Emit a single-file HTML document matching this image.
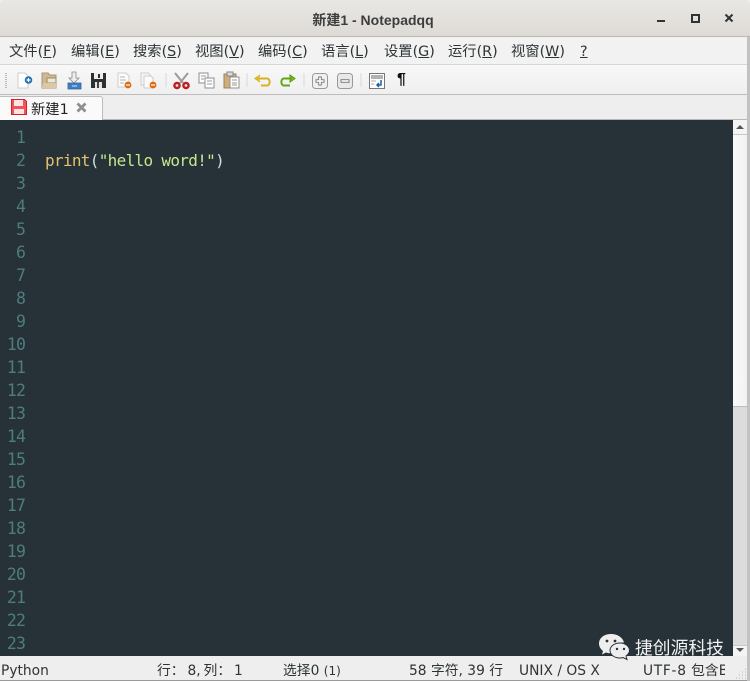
<!DOCTYPE html>
<html><head><meta charset="utf-8"><style>
html,body{margin:0;padding:0;background:#fff}
#w{position:relative;width:750px;height:681px;overflow:hidden;background:#eee;font-family:"DejaVu Sans","Noto Sans CJK SC",sans-serif;color:#2e3436}
#w div,#w span.a,#w svg{position:absolute}
.t{white-space:nowrap}
.m{top:43px;font-size:14.3px;line-height:18px;font-family:"DejaVu Sans","Noto Sans CJK SC",sans-serif;color:#2e3436;white-space:nowrap}
.m u{text-underline-offset:1px}
.n{left:0;width:25px;text-align:right;font:16.5px/23px "DejaVu Sans Mono",monospace;color:#4f7c7c;letter-spacing:-.9px;height:23px}
.s{top:662px;font-size:13.8px;line-height:18px;font-family:"DejaVu Sans","Noto Sans CJK SC",sans-serif;color:#2e3436;white-space:nowrap}
</style></head><body><div id="w">
<div style="left:0;top:0;width:750px;height:37px;background:linear-gradient(#e9e7e4,#dedbd6);border-bottom:1px solid #bfb8ad;box-sizing:border-box;border-radius:5px 5px 0 0"></div>
<div class="t" style="left:0;top:10px;width:746px;text-align:center;font:bold 14px/20px 'Liberation Sans','Noto Sans CJK SC',sans-serif;color:#3d3d3d">新建1 - Notepadqq</div>
<svg style="left:655px;top:10px" width="85" height="16" viewBox="0 0 85 16"><path d="M2 11h8" stroke="#2e3436" stroke-width="2"/><rect x="37" y="5" width="7" height="7" fill="none" stroke="#2e3436" stroke-width="2"/><path d="M70.500 4.500l7 7M77.500 4.500l-7 7" stroke="#2e3436" stroke-width="2"/></svg>
<div style="left:0;top:37px;width:750px;height:28px;background:#f2f2f2;border-bottom:1px solid #d6d6d6;box-sizing:border-box"></div>
<div class="m" style="left:9px">文件(<u>F</u>)</div>
<div class="m" style="left:71px">编辑(<u>E</u>)</div>
<div class="m" style="left:133px">搜索(<u>S</u>)</div>
<div class="m" style="left:195px">视图(<u>V</u>)</div>
<div class="m" style="left:258px">编码(<u>C</u>)</div>
<div class="m" style="left:321px">语言(<u>L</u>)</div>
<div class="m" style="left:384px">设置(<u>G</u>)</div>
<div class="m" style="left:448px">运行(<u>R</u>)</div>
<div class="m" style="left:511px">视窗(<u>W</u>)</div>
<div class="m" style="left:580px"><u>?</u></div>
<div style="left:0;top:65px;width:750px;height:30px;background:linear-gradient(#f8f8f8,#efefef);border-bottom:1px solid #bdbdbd;box-sizing:border-box"></div>
<svg style="left:4px;top:72px" width="6" height="17"><path d="M2 1v15" stroke="#bbb" stroke-width="2" stroke-dasharray="1 1"/></svg>
<svg style="left:0;top:65px" width="420" height="30" viewBox="0 0 420 30">
<path d="M18 8h7l3 3v12H18z" fill="#fff" stroke="#c8ccd0"/><circle cx="28.500" cy="15" r="3.800" fill="#2a6fb5"/><path d="M26.500 15h4M28.500 13v4" stroke="#fff" stroke-width="1.200"/>
<path d="M42 8h6l2 2h6v13H42z" fill="#cdb891" stroke="#ab9672"/><path d="M47 13h9v5h-9z" fill="#eee6d6" stroke="#9c8b6c"/><path d="M42 22l1-4h13v5H42z" fill="#dcc8a4"/>
<path d="M72 7h4v6h3l-5 5-5-5h3z" fill="#eee" stroke="#8a8a8a" stroke-width=".8"/><path d="M68 18h13v6H68z" fill="#3f80c0" stroke="#2a639c" stroke-width=".8"/><path d="M72 21h5" stroke="#cfe3f7"/>
<path d="M91 8h15v15H91z" fill="#2d3134"/><path d="M94 8h9v6h-9z" fill="#eee"/><path d="M95 17h7v6h-7z" fill="#e4e4e4"/><path d="M97 17h2v6h-2z" fill="#444"/><path d="M98 9h2v4h-2z" fill="#2d3134"/>
<path d="M118 8h8l3 3v11h-11z" fill="#fbfbfb" stroke="#cdcdcd"/><path d="M120 12h5M120 15h6M120 18h4" stroke="#b5b5b5"/><circle cx="128" cy="20" r="3.400" fill="#e0690f"/><path d="M126 20h4" stroke="#fff" stroke-width="1.200"/>
<path d="M141 8h7l2 2v10h-9z" fill="#f6f6f6" stroke="#cdcdcd"/><path d="M144 11h7l2 2v10h-9z" fill="#fbfbfb" stroke="#cdcdcd"/><circle cx="153" cy="20" r="3.400" fill="#e0690f"/><path d="M151 20h4" stroke="#fff" stroke-width="1.200"/>
<path d="M166 8v14" stroke="#d8d8d8"/>
<path d="M175 8l8 10M188 8l-8 10" stroke="#9a9a9a" stroke-width="2"/><circle cx="177" cy="20.500" r="2.600" fill="#f0dcdc" stroke="#b8201f" stroke-width="2.400"/><circle cx="186" cy="20.500" r="2.600" fill="#f0dcdc" stroke="#b8201f" stroke-width="2.400"/>
<path d="M199 8h9v10h-9z" fill="#fff" stroke="#8e8e8e"/><path d="M205 13h9v10h-9z" fill="#fff" stroke="#8e8e8e"/><path d="M201 11h5M201 14h3M207 16h5M207 19h5" stroke="#999"/>
<path d="M224 9h12v14h-12z" fill="#cfae7e" stroke="#a2804f"/><path d="M227 7h6v4h-6z" fill="#ddd" stroke="#888"/><path d="M230 12h9v11h-9z" fill="#fff" stroke="#909090"/><path d="M232 15h5M232 18h5M232 20h5" stroke="#999"/>
<path d="M247 8v14" stroke="#d8d8d8"/>
<path d="M260 10l-5 3.500 5 3.500" fill="#f0d36a" stroke="#cfa814" stroke-width="1"/><path d="M257 13.500h10c3.500 0 3.500 7 0 7h-6" fill="none" stroke="#d9b21f" stroke-width="2"/>
<path d="M290 10l5 3.500-5 3.500z" fill="#7ec02c" stroke="#559a10" stroke-width="1"/><path d="M292 13.500h-8c-3.500 0-3.500 7 0 7h6" fill="none" stroke="#62a816" stroke-width="2"/>
<path d="M304 8v14" stroke="#d8d8d8"/>
<rect x="312.500" y="8.500" width="15" height="15" rx="3" fill="#efefef" stroke="#999"/><path d="M320 11.500v9M315.500 16h9" stroke="#7c7c7c" stroke-width="3.600"/><path d="M320 12.500v7M316.500 16h7" stroke="#f6f6f6" stroke-width="1.800"/>
<rect x="337.500" y="8.500" width="15" height="15" rx="3" fill="#e8e8e8" stroke="#999"/><path d="M340.500 16h9" stroke="#7c7c7c" stroke-width="3.600"/><path d="M341.500 16h7" stroke="#f0f0f0" stroke-width="1.800"/>
<path d="M361 8v14" stroke="#d8d8d8"/>
<rect x="369.500" y="8.500" width="15" height="15" fill="#fff" stroke="#777"/><path d="M371 11h12M371 13h12" stroke="#666"/><path d="M371 16h5M371 19h3" stroke="#aaa"/><path d="M381 15v5h-3M379 18l-2 2 2 2" fill="none" stroke="#1c5fb0" stroke-width="1.500"/>
</svg>
<div class="t" style="left:397px;top:71px;font:bold 16px/18px 'Liberation Sans',sans-serif;color:#111">¶</div>
<div style="left:0;top:95px;width:750px;height:25px;background:#eee;border-bottom:1px solid #b8b8b8;box-sizing:border-box"></div>
<div style="left:-1px;top:96px;width:104px;height:24px;background:#fafafa;border:1px solid #bdbdbd;border-bottom:none;box-sizing:border-box;border-radius:0 3px 0 0"></div>
<svg style="left:11px;top:99px" width="16" height="16" viewBox="0 0 16 16"><path d="M.5.5h13l2 2v13H.5z" fill="#f0555a" stroke="#d92028"/><path d="M3 1h9v6H3zM3 10h10v5H3z" fill="#fbe4e4"/></svg>
<div class="t" style="left:31px;top:101px;font:14.3px/18px 'DejaVu Sans','Noto Sans CJK SC',sans-serif;color:#222">新建1</div>
<svg style="left:76px;top:102px" width="11" height="11"><path d="M1.500 1.500l8 8M9.500 1.500l-8 8" stroke="#8b9094" stroke-width="2.800"/></svg>
<div style="left:0;top:120px;width:733px;height:536px;background:#263238;overflow:hidden">
<div class="n" style="top:6px">1</div><div class="n" style="top:29px">2</div><div class="n" style="top:52px">3</div><div class="n" style="top:75px">4</div><div class="n" style="top:98px">5</div><div class="n" style="top:121px">6</div><div class="n" style="top:144px">7</div><div class="n" style="top:167px">8</div><div class="n" style="top:190px">9</div><div class="n" style="top:213px">10</div><div class="n" style="top:236px">11</div><div class="n" style="top:259px">12</div><div class="n" style="top:282px">13</div><div class="n" style="top:305px">14</div><div class="n" style="top:328px">15</div><div class="n" style="top:351px">16</div><div class="n" style="top:374px">17</div><div class="n" style="top:397px">18</div><div class="n" style="top:420px">19</div><div class="n" style="top:443px">20</div><div class="n" style="top:466px">21</div><div class="n" style="top:489px">22</div><div class="n" style="top:512px">23</div>
<div class="t" style="left:45px;top:29px;font:16px/23px 'DejaVu Sans Mono',monospace;letter-spacing:-.68px;color:#c3e88d"><span style="color:#e3c26f">print</span><span style="color:#d5dde0">(</span>"hello word!"<span style="color:#d5dde0">)</span></div>
</div>
<div style="left:733px;top:120px;width:14px;height:536px;background:#dcdcdc"></div>
<div style="left:733px;top:120px;width:14px;height:15px;background:#f4f4f4;border-bottom:1px solid #c8c8c8;box-sizing:border-box"></div>
<svg style="left:736px;top:124px" width="8" height="6"><path d="M0 5l4-4 4 4z" fill="#555"/></svg>
<div style="left:733px;top:135px;width:14px;height:272px;background:linear-gradient(90deg,#fbfbfb,#f2f2f2);border-bottom:1px solid #bdbdbd;box-sizing:border-box"></div>
<div style="left:733px;top:645px;width:14px;height:11px;background:#f4f4f4;border-top:1px solid #c8c8c8;box-sizing:border-box"></div>
<svg style="left:736px;top:647px" width="8" height="6"><path d="M0 1l4 4 4-4z" fill="#555"/></svg>
<div style="left:747px;top:37px;width:3px;height:644px;background:#c2c2c2"></div>
<div style="left:0;top:656px;width:747px;height:25px;background:#eee;border-bottom:1px solid #9a9a9a;box-sizing:border-box"></div>
<div class="s" style="left:1px">Python</div>
<div class="s" style="left:157px;word-spacing:-1.500px">行： 8, 列： 1</div>
<div class="s" style="left:283px">选择0 <span style="font-size:12px">(1)</span></div>
<div class="s" style="left:409px">58 字符, 39 行</div>
<div class="s" style="left:519px">UNIX / OS X</div>
<div class="s" style="left:643px;width:82px;overflow:hidden"><span style="letter-spacing:.7px">UTF-8</span> 包含BOM</div>
<svg style="left:736px;top:668px" width="11" height="11"><path d="M9 1h1M6 4h1M9 4h1M3 7h1M6 7h1M9 7h1M0 10h1M3 10h1M6 10h1M9 10h1" stroke="#b5b5b5"/></svg>
<svg style="left:598px;top:633px" width="34" height="28" viewBox="0 0 34 28"><path d="M13 1C6 1 1 5 1 10.500c0 3 1.500 5.500 4 7.500l-1 3.500 4-2c2 .6 3 .8 5 .8C12 15 17 9 26 9.500 25 5 20 1 13 1z" fill="#eee"/><path d="M22 10c-6 0-10 3.500-10 7.500s4 7.500 10 7.500c1.500 0 2-.1 3-.5l4 2-1-3.500c2-1.500 3.500-3 3.500-5.500 0-4-4-7.500-9.500-7.500z" fill="#eee" stroke="#263238" stroke-width="1"/><circle cx="9" cy="8" r="1.400" fill="#263238"/><circle cx="17" cy="8" r="1.400" fill="#263238"/><circle cx="19" cy="16" r="1.200" fill="#263238"/><circle cx="26" cy="16" r="1.200" fill="#263238"/></svg>
<div class="t" style="left:635px;top:636px;font:17.800px/23px 'Noto Sans CJK SC',sans-serif;color:#f2f2f2">捷创源科技</div>
</div></body></html>
